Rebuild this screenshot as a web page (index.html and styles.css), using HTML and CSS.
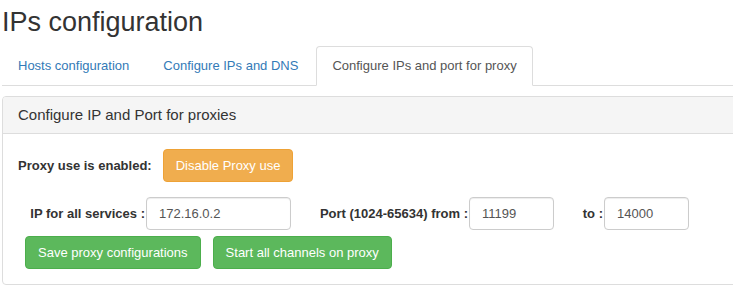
FILE: index.html
```html
<!DOCTYPE html>
<html lang="en">
<head>
  <meta charset="UTF-8" />
  <title>IPs configuration</title>
  <link rel="stylesheet" href="styles.css">
</head>
<body>
  <div class="page">
    <h1>IPs configuration</h1>

    <ul class="nav-tabs">
      <li><a href="#">Hosts configuration</a></li>
      <li><a href="#">Configure IPs and DNS</a></li>
      <li class="active"><a href="#">Configure IPs and port for proxy</a></li>
    </ul>

    <div class="panel">
      <div class="panel-heading">Configure IP and Port for proxies</div>
      <div class="panel-body">
        <div class="row-status">
          <label class="lbl-status">Proxy use is enabled:</label>
          <button class="btn btn-warning">Disable Proxy use</button>
        </div>

        <div class="row-fields">
          <label class="lbl lbl-ip">IP for all services :</label>
          <input class="form-control input-ip" type="text" value="172.16.0.2">
          <label class="lbl lbl-port">Port (1024-65634) from :</label>
          <input class="form-control input-port" type="text" value="11199">
          <label class="lbl lbl-to">to :</label>
          <input class="form-control input-port" type="text" value="14000">
        </div>

        <div class="row-actions">
          <button class="btn btn-success">Save proxy configurations</button>
          <button class="btn btn-success">Start all channels on proxy</button>
        </div>
      </div>
    </div>
  </div>
</body>
</html>
```

FILE: styles.css
```css
html, body {
  overflow: hidden;
}
body {
  margin: 0;
  font-family: "Liberation Sans", Arial, sans-serif;
  font-size: 13px;
  color: #333;
  background: #fff;
}
.page {
  padding-left: 2px;
  margin-right: -20px;
}
h1 {
  font-size: 27px;
  font-weight: normal;
  line-height: 30px;
  margin: 7px 0 9px;
  color: #333;
}

.nav-tabs {
  list-style: none;
  margin: 0;
  padding: 0;
  display: flex;
  border-bottom: 1px solid #ddd;
}
.nav-tabs li {
  margin-bottom: -1px;
}
.nav-tabs a {
  display: block;
  padding: 10px 15px;
  margin-right: 2px;
  line-height: 18px;
  border: 1px solid transparent;
  border-radius: 4px 4px 0 0;
  color: #337ab7;
  text-decoration: none;
}
.nav-tabs li.active a {
  color: #555;
  background: #fff;
  border-color: #ddd #ddd transparent;
}

.panel {
  margin-top: 10px;
  border: 1px solid #ddd;
  border-radius: 4px;
  background: #fff;
}
.panel-heading {
  padding: 10px 15px;
  font-size: 15px;
  line-height: 16px;
  color: #333;
  background: #f5f5f5;
  border-bottom: 1px solid #ddd;
  border-radius: 3px 3px 0 0;
}
.panel-body {
  padding: 15px;
}

.row-status,
.row-fields,
.row-actions {
  display: flex;
  align-items: center;
}
.row-fields {
  margin-top: 15px;
}
.row-actions {
  margin-top: 6px;
  padding-left: 7px;
  gap: 12px;
}

label {
  font-weight: bold;
}
.lbl-status {
  margin-right: 11px;
}
.lbl {
  text-align: right;
  padding-right: 1px;
  box-sizing: border-box;
}
.lbl-ip {
  width: 128px;
}
.lbl-port {
  width: 178px;
}
.lbl-to {
  width: 50px;
}

.form-control {
  box-sizing: border-box;
  height: 33px;
  padding: 6px 12px;
  font-family: inherit;
  font-size: 13px;
  color: #555;
  background: #fff;
  border: 1px solid #ccc;
  border-radius: 4px;
  box-shadow: inset 0 1px 1px rgba(0,0,0,0.075);
}
.input-ip {
  width: 145px;
}
.input-port {
  width: 85px;
}

.btn {
  box-sizing: border-box;
  height: 33px;
  padding: 6px 12px;
  font-family: inherit;
  font-size: 13px;
  line-height: 18px;
  color: #fff;
  border: 1px solid transparent;
  border-radius: 4px;
  cursor: pointer;
}
.btn-warning {
  background-color: #f0ad4e;
  border-color: #eea236;
}
.btn-success {
  background-color: #5cb85c;
  border-color: #4cae4c;
}
```
